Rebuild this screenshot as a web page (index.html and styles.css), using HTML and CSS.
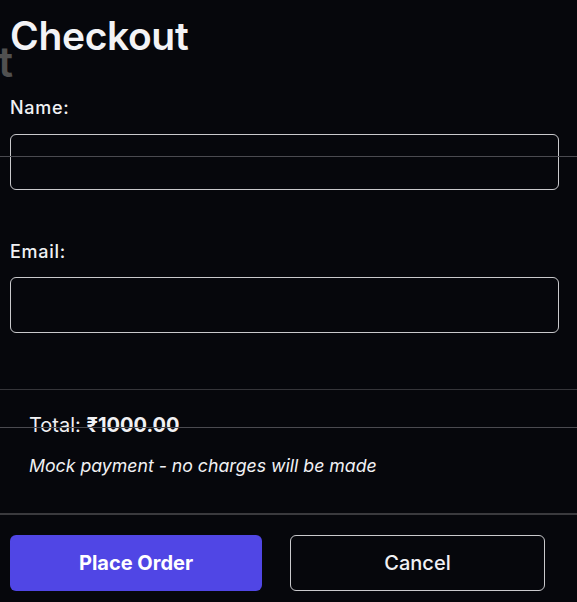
FILE: index.html
```html
<!DOCTYPE html>
<html lang="en">
<head>
<meta charset="utf-8">
<title>Checkout</title>
<link rel="stylesheet" href="styles.css">
</head>
<body>
<div class="ghost" aria-hidden="true">Checkout</div>
<div class="overlay-line line-a"></div>
<div class="overlay-line line-b"></div>
<main class="checkout">
  <h1 class="title">Checkout</h1>
  <form class="form">
    <label class="field">
      <span class="label">Name:</span>
      <input class="input" type="text">
    </label>
    <label class="field field-email">
      <span class="label">Email:</span>
      <input class="input" type="email">
    </label>
  </form>
  <section class="summary">
    <p class="total">Total: <strong>₹1000.00</strong></p>
    <p class="note">Mock payment - no charges will be made</p>
  </section>
  <div class="actions">
    <button class="btn btn-primary" type="button">Place Order</button>
    <button class="btn btn-outline" type="button">Cancel</button>
  </div>
</main>
</body>
</html>
```
FILE: styles.css
```css
* { box-sizing: border-box; }
html, body {
  margin: 0;
  padding: 0;
  background: #06070c;
  color: #f1f1f4;
  font-family: Inter, "Noto Sans", sans-serif;
  height: 100%;
  overflow: hidden;
}
body { position: relative; }

.ghost {
  position: absolute;
  top: 37px;
  right: calc(100% - 13px);
  font-size: 42px;
  font-weight: 600;
  line-height: 50px;
  color: #505050;
  white-space: nowrap;
}
.overlay-line {
  position: absolute;
  left: 0;
  right: 0;
  height: 1px;
  background: #4a4a50;
  z-index: 2;
  pointer-events: none;
}
.line-a { top: 156px; }
.line-b { top: 427px; }

.checkout {
  display: flex;
  flex-direction: column;
  position: relative;
  z-index: 1;
}
.title {
  margin: 13px 0 0 10px;
  font-size: 39px;
  line-height: 46px;
  font-weight: 600;
  letter-spacing: -0.35px;
  color: #f3f3f6;
}
.form {
  display: flex;
  flex-direction: column;
  padding: 0 18px 0 10px;
  margin-top: 37px;
}
.field {
  display: flex;
  flex-direction: column;
  gap: 14px;
}
.field-email { margin-top: 50px; gap: 13px; }
.label {
  font-size: 18px;
  line-height: 24px;
  font-weight: 500;
  letter-spacing: 0.7px;
}
.input {
  height: 56px;
  border: 1px solid #c9c9cc;
  border-radius: 6px;
  background: transparent;
  color: #fff;
  font: inherit;
  padding: 0 12px;
}
.summary {
  margin-top: 56px;
  border-top: 1px solid #35353a;
  border-bottom: 2px solid #3a3a3e;
  padding: 22px 29px 36px;
}
.total {
  margin: 0;
  font-size: 20px;
  line-height: 26px;
}
.total strong { font-weight: 700; }
.note {
  margin: 17px 0 0;
  font-size: 17.7px;
  line-height: 22px;
  font-style: italic;
}
.actions {
  display: flex;
  gap: 28px;
  padding: 20px 10px 0;
}
.btn {
  height: 56px;
  border-radius: 6px;
  font-family: inherit;
  font-size: 20px;
  font-weight: 700;
  cursor: pointer;
}
.btn-primary {
  width: 252px;
  background: #5046e5;
  color: #fff;
  border: none;
}
.btn-outline {
  width: 255px;
  background: transparent;
  color: #f1f1f4;
  border: 1px solid #c9c9cc;
  font-weight: 500;
}
```
